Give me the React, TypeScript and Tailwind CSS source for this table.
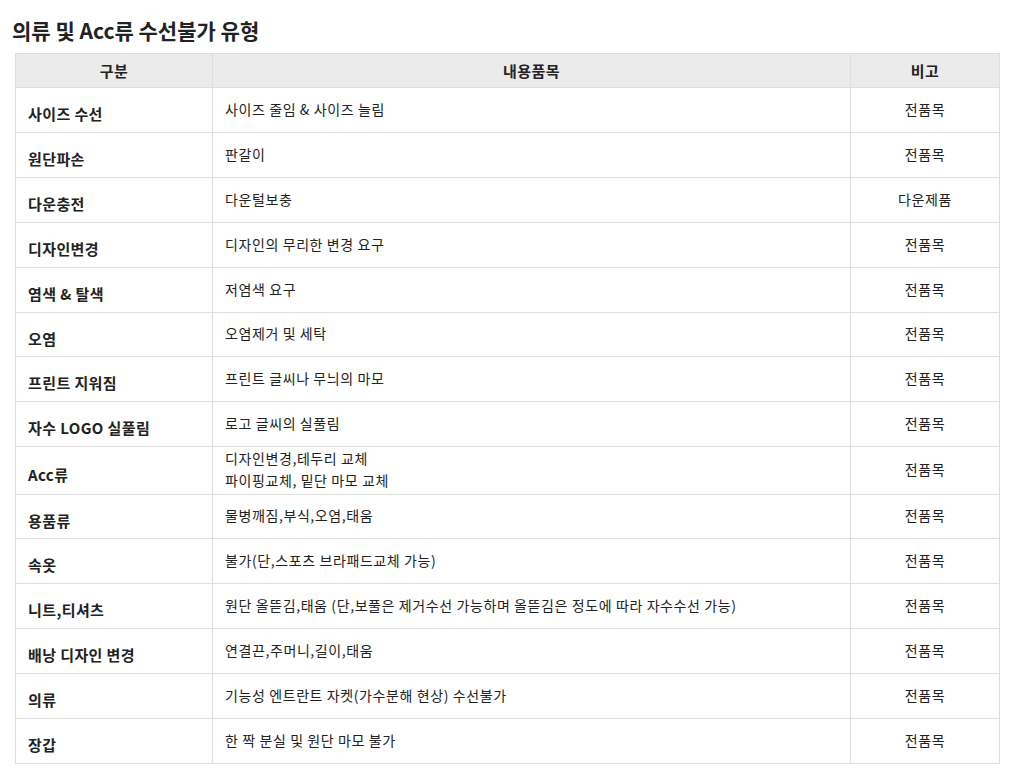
const rows: { name: string; items: string[]; note: string; h?: string }[] = [
  { name: "사이즈 수선", items: ["사이즈 줄임 & 사이즈 늘림"], note: "전품목" },
  { name: "원단파손", items: ["판갈이"], note: "전품목" },
  { name: "다운충전", items: ["다운털보충"], note: "다운제품" },
  { name: "디자인변경", items: ["디자인의 무리한 변경 요구"], note: "전품목" },
  { name: "염색 & 탈색", items: ["저염색 요구"], note: "전품목" },
  { name: "오염", items: ["오염제거 및 세탁"], note: "전품목", h: "h-[44px]" },
  { name: "프린트 지워짐", items: ["프린트 글씨나 무늬의 마모"], note: "전품목" },
  { name: "자수 LOGO 실풀림", items: ["로고 글씨의 실풀림"], note: "전품목" },
  { name: "Acc류", items: ["디자인변경,테두리 교체", "파이핑교체, 밑단 마모 교체"], note: "전품목", h: "h-[47px]" },
  { name: "용품류", items: ["물병깨짐,부식,오염,태움"], note: "전품목", h: "h-[44px]" },
  { name: "속옷", items: ["불가(단,스포츠 브라패드교체 가능)"], note: "전품목" },
  {
    name: "니트,티셔츠",
    items: ["원단 올뜯김,태움 (단,보풀은 제거수선 가능하며 올뜯김은 정도에 따라 자수수선 가능)"],
    note: "전품목",
  },
  { name: "배낭 디자인 변경", items: ["연결끈,주머니,길이,태움"], note: "전품목" },
  { name: "의류", items: ["기능성 엔트란트 자켓(가수분해 현상) 수선불가"], note: "전품목" },
  { name: "장갑", items: ["한 짝 분실 및 원단 마모 불가"], note: "전품목" },
];

const App = () => {
  return (
    <div
      className="bg-white text-[#222] min-h-[769px]"
      style={{ fontFamily: '"Noto Sans CJK KR", "Noto Sans", sans-serif' }}
    >
      <h2 className="pl-3 pt-[14px] pb-[7px] text-[21px] leading-[32px] font-bold">
        의류 및 Acc류 수선불가 유형
      </h2>
      <table className="ml-[15px] w-[984px] border-collapse table-fixed text-[14px] leading-[20px] tracking-[0.6px]">
        <colgroup>
          <col className="w-[197px]" />
          <col className="w-[638px]" />
          <col className="w-[149px]" />
        </colgroup>
        <thead>
          <tr className="h-[34px] bg-[#ebebeb]">
            <th className="border border-[#dedede] font-bold text-[15px] tracking-[0.4px]">구분</th>
            <th className="border border-[#dedede] font-bold text-[15px] tracking-[0.4px]">내용품목</th>
            <th className="border border-[#dedede] font-bold text-[15px] tracking-[0.4px]">비고</th>
          </tr>
        </thead>
        <tbody>
          {rows.map((r) => (
            <tr key={r.name} className={r.h ?? "h-[45px]"}>
              <td className="border border-[#dedede] px-3 pt-[8px] pb-0 align-middle font-bold text-[15px] tracking-[0.4px]">
                {r.name}
              </td>
              <td className="border border-[#dedede] px-3 pb-[3px] align-middle leading-[22px]">
                {r.items.map((t) => (
                  <div key={t}>{t}</div>
                ))}
              </td>
              <td className="border border-[#dedede] pb-[3px] text-center align-middle">{r.note}</td>
            </tr>
          ))}
        </tbody>
      </table>
    </div>
  );
};

export default App;
